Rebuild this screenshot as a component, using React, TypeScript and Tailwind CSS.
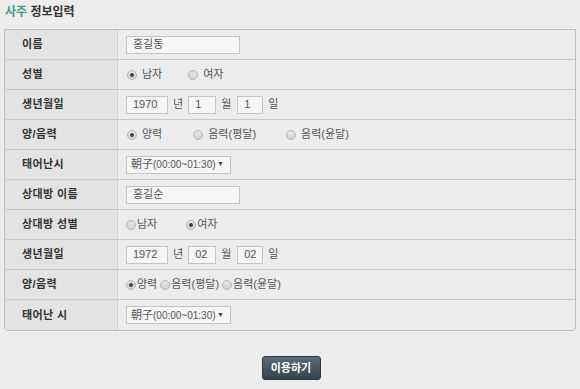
import React from "react";

const font = { fontFamily: '"Liberation Sans", "Noto Sans CJK KR", sans-serif' };

function Radio({ checked }: { checked?: boolean }) {
  return (
    <span className="inline-flex h-[10px] w-[10px] shrink-0 items-center justify-center rounded-full border border-[#b5b5b5] bg-gradient-to-b from-[#e6e6e6] to-[#d2d2d2]">
      {checked && <span className="h-[4px] w-[4px] rounded-full bg-[#444]" />}
    </span>
  );
}

function RadioItem({ checked, label, gap, cls = "" }: { checked?: boolean; label: string; gap: string; cls?: string }) {
  return (
    <span className={`inline-flex items-center whitespace-nowrap ${gap} ${cls}`}>
      <Radio checked={checked} />
      <span>{label}</span>
    </span>
  );
}

function Box({ value, w }: { value: string; w: string }) {
  return (
    <span className={`inline-flex h-[18px] items-center border border-[#c4c4c4] bg-[#f6f6f6] pl-[6px] text-[11px] text-[#555] ${w}`}>
      {value}
    </span>
  );
}

function Select() {
  return (
    <span className="inline-flex h-[18px] w-[105px] items-center justify-between whitespace-nowrap border border-[#c4c4c4] bg-[#f6f6f6] pl-[4px] pr-[6px] text-[10px] text-[#555]">
      <span className="whitespace-nowrap">
        <span className="text-[11px]">朝子</span>(00:00~01:30)
      </span>
      <span className="text-[7px] text-[#444]">▼</span>
    </span>
  );
}

function Row({ label, children, last }: { label: string; children: React.ReactNode; last?: boolean }) {
  return (
    <div className={`flex h-[30px] ${last ? "" : "border-b border-[#c9c9c9]"}`}>
      <div className="flex w-[113px] items-center border-r border-[#cfcfcf] bg-[#e3e3e3] pl-[17px] text-[11px] font-bold tracking-[0.4px] text-[#333]">
        {label}
      </div>
      <div className="flex flex-1 items-center pl-[8px] text-[11px] text-[#555]">{children}</div>
    </div>
  );
}

export default function App() {
  return (
    <div className="h-[389px] w-[580px] bg-[#ededed]" style={font}>
      <div className="pl-[5px] pt-[4px] text-[12px] font-bold leading-[16px]">
        <span className="text-[#3f9a8c]">사주</span> <span className="text-[#333]">정보입력</span>
      </div>
      <div className="ml-[4px] mt-[9px] w-[572px] overflow-hidden rounded-b-[4px] border border-[#bdbdbd] bg-[#ececec]">
        <Row label="이름">
          <Box value="홍길동" w="w-[114px]" />
        </Row>
        <Row label="성별">
          <span className="flex items-center pl-[1px]">
            <RadioItem checked label="남자" gap="gap-[5px]" />
            <RadioItem label="여자" gap="gap-[5px]" cls="ml-[26px]" />
          </span>
        </Row>
        <Row label="생년월일">
          <span className="flex items-center">
            <Box value="1970" w="w-[42px]" />
            <span className="ml-[5px] mr-[5px]">년</span>
            <Box value="1" w="w-[28px]" />
            <span className="ml-[5px] mr-[6px]">월</span>
            <Box value="1" w="w-[26px]" />
            <span className="ml-[5px]">일</span>
          </span>
        </Row>
        <Row label="양/음력">
          <span className="flex items-center pl-[1px]">
            <RadioItem checked label="양력" gap="gap-[5px]" />
            <RadioItem label="음력(평달)" gap="gap-[5px]" cls="ml-[31px]" />
            <RadioItem label="음력(윤달)" gap="gap-[5px]" cls="ml-[30px]" />
          </span>
        </Row>
        <Row label="태어난시">
          <Select />
        </Row>
        <Row label="상대방 이름">
          <Box value="홍길순" w="w-[114px]" />
        </Row>
        <Row label="상대방 성별">
          <span className="flex items-center">
            <RadioItem label="남자" gap="gap-[1px]" />
            <RadioItem checked label="여자" gap="gap-[1px]" cls="ml-[29px]" />
          </span>
        </Row>
        <Row label="생년월일">
          <span className="flex items-center">
            <Box value="1972" w="w-[42px]" />
            <span className="ml-[5px] mr-[5px]">년</span>
            <Box value="02" w="w-[28px]" />
            <span className="ml-[5px] mr-[6px]">월</span>
            <Box value="02" w="w-[26px]" />
            <span className="ml-[5px]">일</span>
          </span>
        </Row>
        <Row label="양/음력">
          <span className="flex items-center gap-[3px]">
            <RadioItem checked label="양력" gap="gap-[1px]" />
            <RadioItem label="음력(평달)" gap="gap-[1px]" />
            <RadioItem label="음력(윤달)" gap="gap-[1px]" />
          </span>
        </Row>
        <Row label="태어난 시" last>
          <Select />
        </Row>
      </div>
      <div className="mt-[25px] flex justify-center">
        <button className="ml-[2px] h-[24px] w-[59px] rounded-[3px] border border-[#2e3a42] bg-gradient-to-b from-[#5a6b78] to-[#34444f] text-[11px] font-bold text-white">
          이용하기
        </button>
      </div>
    </div>
  );
}
